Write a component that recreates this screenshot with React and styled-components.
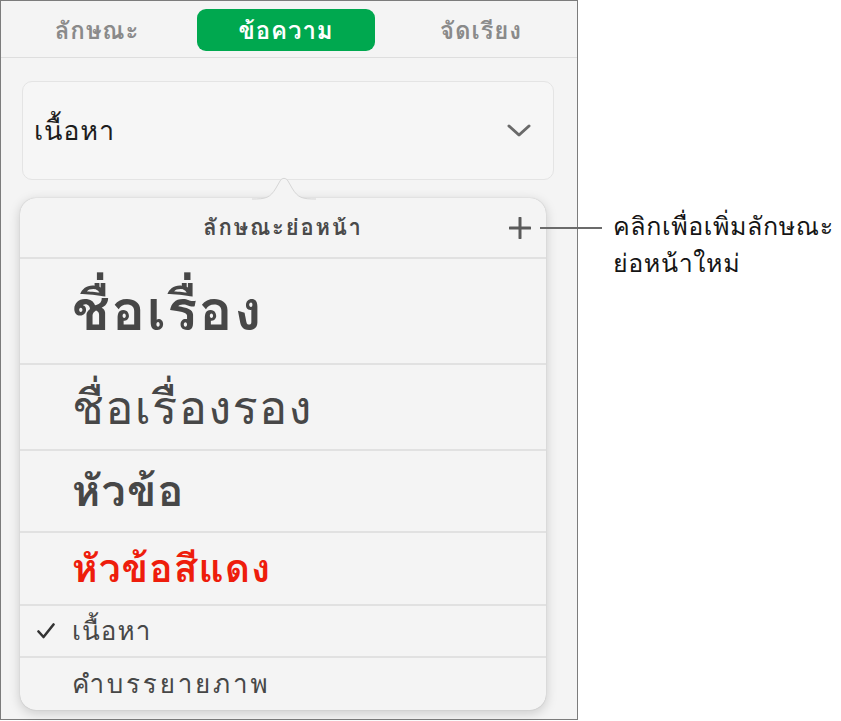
import React from "react";
import styled, { createGlobalStyle } from "styled-components";

const GlobalStyle = createGlobalStyle`
  html, body { margin: 0; padding: 0; background: #ffffff; }
  body { font-family: "Loma", "Waree", "Garuda", "Noto Sans Thai Looped", "Noto Sans Thai", "Noto Sans", "Liberation Sans", sans-serif; }
  * { box-sizing: border-box; }
`;

const Page = styled.div`
  display: flex;
  align-items: flex-start;
  width: 841px;
  height: 721px;
`;

const Frame = styled.div`
  width: 578px;
  height: 720px;
  border: 1.5px solid #7c7c7c;
  border-top-width: 1px;
  background: #f4f4f4;
  display: flex;
  flex-direction: column;
`;

const Tabs = styled.div`
  display: grid;
  grid-template-columns: repeat(3, 1fr);
  height: 57px;
  padding: 8px 0 0;
  border-bottom: 1.5px solid #dedede;
`;

const Tab = styled.div`
  height: 42px;
  margin: ${(p) => (p.$active ? "0 10px 0 4px" : "0")};
  border-radius: 9px;
  display: flex;
  align-items: center;
  justify-content: center;
  font-size: 24px;
  font-weight: 700;
  letter-spacing: 0.9px;
  color: ${(p) => (p.$active ? "#ffffff" : "#8a8a8a")};
  background: ${(p) => (p.$active ? "#00a84f" : "transparent")};
`;

const Select = styled.div`
  margin: 23px 23px 0 21px;
  height: 99px;
  border: 1.5px solid #e4e4e4;
  border-radius: 10px;
  background: #f6f6f6;
  display: flex;
  align-items: center;
  justify-content: space-between;
  padding: 0 22px 0 11px;
`;

const SelectLabel = styled.span`
  font-size: 27px;
  font-weight: 500;
  letter-spacing: 0.8px;
  color: #1d1d1d;
`;

const Popover = styled.div`
  position: relative;
  margin: 18px 31px 0 19px;
  height: 512px;
  border-radius: 16px;
  background: #f4f4f4;
  box-shadow: 0 3px 12px rgba(0, 0, 0, 0.18), 0 0 1px rgba(0, 0, 0, 0.25);
  display: flex;
  flex-direction: column;
`;

const Pointer = styled.svg`
  position: absolute;
  top: -28px;
  left: 232px;
  width: 64px;
  height: 30px;
  overflow: visible;
`;

const Header = styled.div`
  position: relative;
  height: 59px;
  display: flex;
  align-items: center;
  justify-content: center;
  font-size: 22px;
  font-weight: 700;
  letter-spacing: 1.8px;
  color: #4a4a4a;
`;

const PlusButton = styled.svg`
  position: absolute;
  right: 15px;
  top: 19px;
  width: 22px;
  height: 22px;
`;

const Row = styled.div`
  height: ${(p) => p.$h}px;
  border-top: 2px solid #e1e1e1;
  display: flex;
  align-items: center;
  padding-left: ${(p) => (p.$check ? "17px" : "52px")};
  color: ${(p) => p.$color};
  font-size: ${(p) => p.$size}px;
  font-weight: ${(p) => p.$weight};
  letter-spacing: ${(p) => p.$ls}px;
  line-height: 1;
`;

const Check = styled.svg`
  width: 18px;
  height: 16px;
  margin-right: 17px;
`;

const Annotation = styled.div`
  position: relative;
  z-index: 2;
  margin-left: -38px;
  margin-top: 208px;
  display: flex;
  align-items: flex-start;
`;

const Leader = styled.div`
  width: 62px;
  height: 1.5px;
  margin-top: 19px;
  background: #6b6b6b;
`;

const Note = styled.div`
  margin-left: 11px;
  font-size: 25px;
  line-height: 37px;
  letter-spacing: 0.6px;
  color: #151515;
  font-weight: 400;
`;

const GREY = "#474747";
const RED = "#ee1d0c";

const rows = [
  { text: "ชื่อเรื่อง", h: 106, size: 56, weight: 800, ls: 1.5, color: GREY },
  { text: "ชื่อเรื่องรอง", h: 86, size: 47, weight: 500, ls: 1.3, color: GREY },
  { text: "หัวข้อ", h: 82, size: 43, weight: 700, ls: 1.2, color: GREY },
  { text: "หัวข้อสีแดง", h: 73, size: 39, weight: 800, ls: 1, color: RED },
  { text: "เนื้อหา", h: 52, size: 26, weight: 400, ls: 1.1, color: GREY, check: true },
  { text: "คำบรรยายภาพ", h: 53, size: 26, weight: 400, ls: 2.8, color: GREY },
];

export default function App() {
  return (
    <>
      <GlobalStyle />
      <Page>
        <Frame>
          <Tabs>
            <Tab>ลักษณะ</Tab>
            <Tab $active>ข้อความ</Tab>
            <Tab>จัดเรียง</Tab>
          </Tabs>
          <Select>
            <SelectLabel>เนื้อหา</SelectLabel>
            <svg width="24" height="14" viewBox="0 0 24 14">
              <path d="M2 2 L12 11 L22 2" fill="none" stroke="#6a6a6a" strokeWidth="3" strokeLinecap="round" strokeLinejoin="round" />
            </svg>
          </Select>
          <Popover>
            <Pointer viewBox="0 0 64 30">
              <path d="M0 29 C14 29 18 28 24 18 L28 11 C30 7.5 34 7.5 36 11 L40 18 C46 28 50 29 64 29 L64 31 L0 31 Z" fill="#f4f4f4" />
              <path d="M0 29 C14 29 18 28 24 18 L28 11 C30 7.5 34 7.5 36 11 L40 18 C46 28 50 29 64 29" fill="none" stroke="#d6d6d6" strokeWidth="1" />
            </Pointer>
            <Header>
              ลักษณะย่อหน้า
              <PlusButton viewBox="0 0 22 22">
                <path d="M11 1 V21 M1 11 H21" stroke="#5a5a5a" strokeWidth="3" strokeLinecap="round" />
              </PlusButton>
            </Header>
            {rows.map((r) => (
              <Row
                key={r.text}
                $h={r.h}
                $size={r.size}
                $weight={r.weight}
                $ls={r.ls}
                $color={r.color}
                $check={r.check}
              >
                {r.check && (
                  <Check viewBox="0 0 18 16">
                    <path d="M1.5 8.5 L6.5 14 L16.5 1.5" fill="none" stroke="#333" strokeWidth="2.6" strokeLinecap="round" strokeLinejoin="round" />
                  </Check>
                )}
                {r.text}
              </Row>
            ))}
          </Popover>
        </Frame>
        <Annotation>
          <Leader />
          <Note>
            คลิกเพื่อเพิ่มลักษณะ
            <br />
            ย่อหน้าใหม่
          </Note>
        </Annotation>
      </Page>
    </>
  );
}
